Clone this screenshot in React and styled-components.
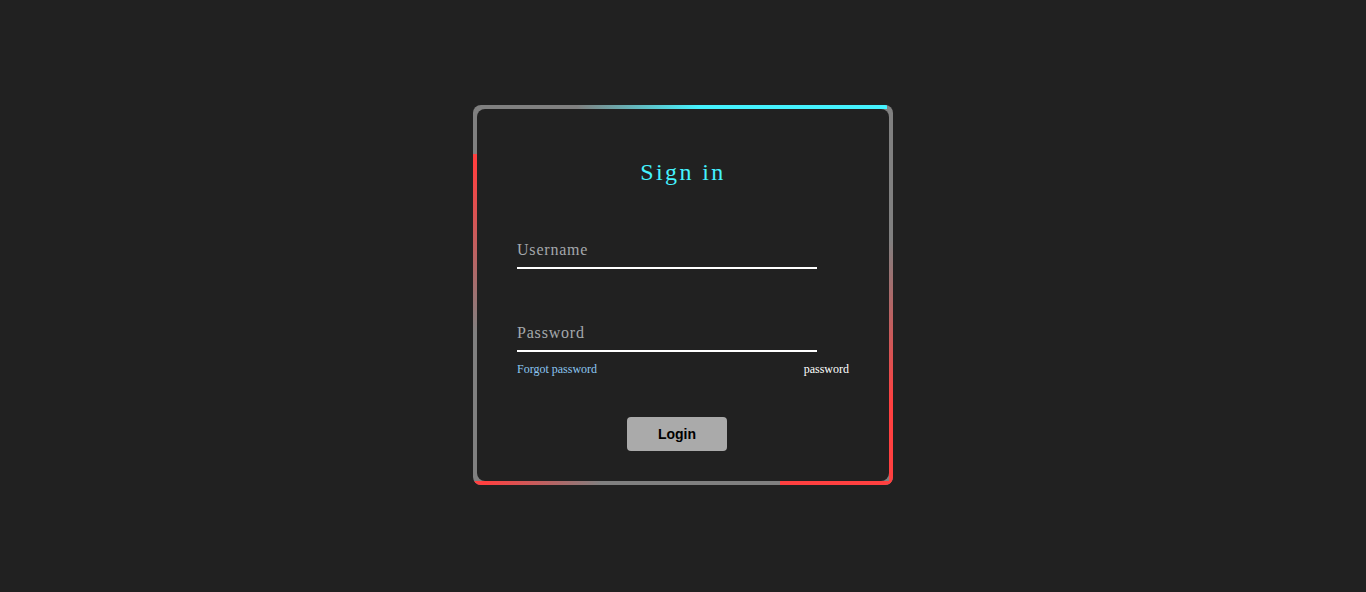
import styled, { createGlobalStyle } from "styled-components";

const GlobalStyle = createGlobalStyle`
  body {
    margin: 0;
    background: #212121;
    font-family: "Liberation Serif", serif;
  }
`;

const Page = styled.div`
  min-height: 100vh;
  display: flex;
  align-items: center;
  justify-content: center;
`;

const Frame = styled.div`
  position: relative;
  width: 420px;
  height: 380px;
  padding: 4px;
  box-sizing: border-box;
  border-radius: 8px;
  overflow: hidden;
  background: #808080;
  margin-top: -2px;
`;

const Glow = styled.span`
  position: absolute;
  display: block;
`;

const TopGlow = styled(Glow)`
  top: 0;
  left: 0;
  width: 100%;
  height: 4px;
  background: linear-gradient(
    90deg,
    transparent 0,
    transparent 104px,
    #45f3ff 226px,
    #45f3ff 414px,
    transparent 414px
  );
`;

const LeftGlow = styled(Glow)`
  top: 0;
  left: 0;
  width: 4px;
  height: 100%;
  background: linear-gradient(
    180deg,
    transparent 0,
    transparent 49px,
    #ff4040 49px,
    #ff4040 60px,
    transparent 228px
  );
`;

const RightGlow = styled(Glow)`
  top: 0;
  right: 0;
  width: 4px;
  height: 100%;
  background: linear-gradient(
    180deg,
    transparent 0,
    transparent 135px,
    #ff4040 298px,
    #ff4040 100%
  );
`;

const BottomGlow = styled(Glow)`
  bottom: 0;
  left: 0;
  width: 100%;
  height: 4px;
  background: linear-gradient(
    90deg,
    #ff4040 0,
    #ff4040 12px,
    transparent 128px,
    transparent 307px,
    #ff4040 307px,
    #ff4040 100%
  );
`;

const Form = styled.form`
  position: relative;
  z-index: 1;
  height: 100%;
  box-sizing: border-box;
  padding: 50px 40px;
  border-radius: 8px;
  background: #212121;
  display: flex;
  flex-direction: column;
`;

const Title = styled.h2`
  margin: 0;
  color: #45f3ff;
  font-size: 24px;
  font-weight: 500;
  letter-spacing: 0.1em;
  text-align: center;
`;

const Field = styled.div`
  width: 300px;
  margin-top: ${(p) => p.$gap}px;
  padding-bottom: 8px;
  border-bottom: 2px solid #ffffff;
`;

const FieldLabel = styled.label`
  display: block;
  line-height: 18px;
  font-size: 16px;
  letter-spacing: 0.05em;
  color: #a4a8ac;
`;

const Links = styled.div`
  display: flex;
  justify-content: space-between;
  margin-top: 10px;
  font-size: 12px;
`;

const ForgotLink = styled.a`
  color: #8cc6f2;
  text-decoration: none;
`;

const SignupLink = styled.a`
  color: #ffffff;
  text-decoration: none;
`;

const ButtonRow = styled.div`
  margin-top: 40px;
  padding-left: 110px;
`;

const LoginButton = styled.button`
  width: 100px;
  height: 34px;
  border: none;
  border-radius: 4px;
  background: #aaaaaa;
  color: #000000;
  font-family: "Liberation Sans", Arial, sans-serif;
  font-size: 14px;
  font-weight: 700;
  cursor: pointer;
`;

const App = () => {
  return (
    <>
      <GlobalStyle />
      <Page>
        <Frame>
          <TopGlow />
          <RightGlow />
          <BottomGlow />
          <LeftGlow />
          <Form onSubmit={(e) => e.preventDefault()}>
            <Title>Sign in</Title>
            <Field $gap={55}>
              <FieldLabel>Username</FieldLabel>
            </Field>
            <Field $gap={55}>
              <FieldLabel>Password</FieldLabel>
            </Field>
            <Links>
              <ForgotLink href="#">Forgot password</ForgotLink>
              <SignupLink href="#">password</SignupLink>
            </Links>
            <ButtonRow>
              <LoginButton type="submit">Login</LoginButton>
            </ButtonRow>
          </Form>
        </Frame>
      </Page>
    </>
  );
};

export default App;
